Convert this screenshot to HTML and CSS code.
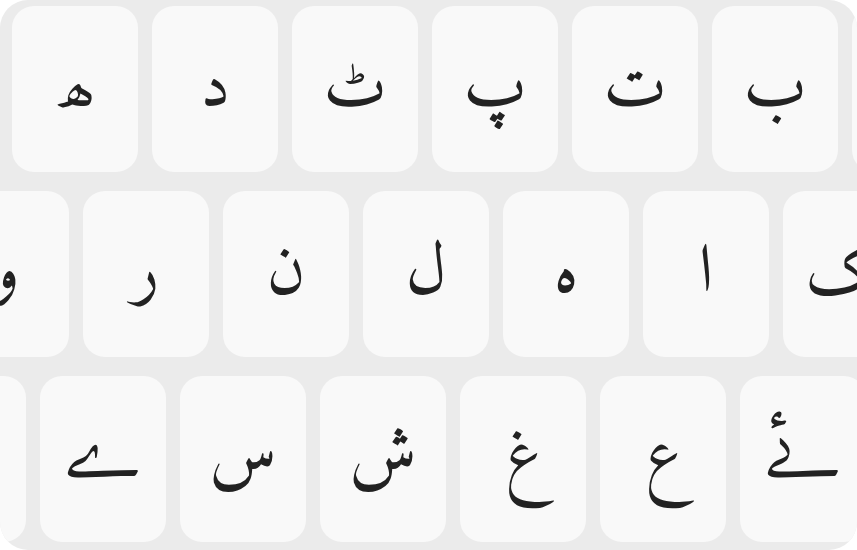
FILE: index.html
```html
<!DOCTYPE html>
<html lang="ur">
<head>
<meta charset="utf-8">
<link rel="stylesheet" href="styles.css">
</head>
<body>
<div class="keyboard">
  <div class="row row-1">
    <div class="key">ھ</div>
    <div class="key">د</div>
    <div class="key">ٹ</div>
    <div class="key">پ</div>
    <div class="key">ت</div>
    <div class="key">ب</div>
    <div class="key">ج</div>
  </div>
  <div class="row row-2">
    <div class="key">و</div>
    <div class="key">ر</div>
    <div class="key">ن</div>
    <div class="key">ل</div>
    <div class="key">ہ</div>
    <div class="key">ا</div>
    <div class="key">ک</div>
  </div>
  <div class="row row-3">
    <div class="key"></div>
    <div class="key">ے</div>
    <div class="key">س</div>
    <div class="key">ش</div>
    <div class="key">غ</div>
    <div class="key">ع</div>
    <div class="key">ۓ</div>
  </div>
</div>
</body>
</html>
```
FILE: styles.css
```css
html, body {
  margin: 0;
  padding: 0;
  background: #ffffff;
}
.keyboard {
  width: 857px;
  height: 550px;
  box-sizing: border-box;
  background: #ebebeb;
  border-radius: 28px;
  overflow: hidden;
  padding-top: 6px;
  display: flex;
  flex-direction: column;
  gap: 19px;
}
.row {
  display: flex;
  gap: 14px;
  flex: none;
}
.row-1 { margin-left: 12px; }
.row-2 { margin-left: -57px; }
.row-3 { margin-left: -100px; }
.key {
  flex: none;
  width: 126px;
  height: 166px;
  border-radius: 22px;
  background: #f9f9f9;
  display: flex;
  align-items: center;
  justify-content: center;
  font-family: "Amiri", "DejaVu Sans", serif;
  font-size: 68px;
  color: #222222;
  line-height: 1;
  padding-top: 2px;
  box-sizing: border-box;
}
```
